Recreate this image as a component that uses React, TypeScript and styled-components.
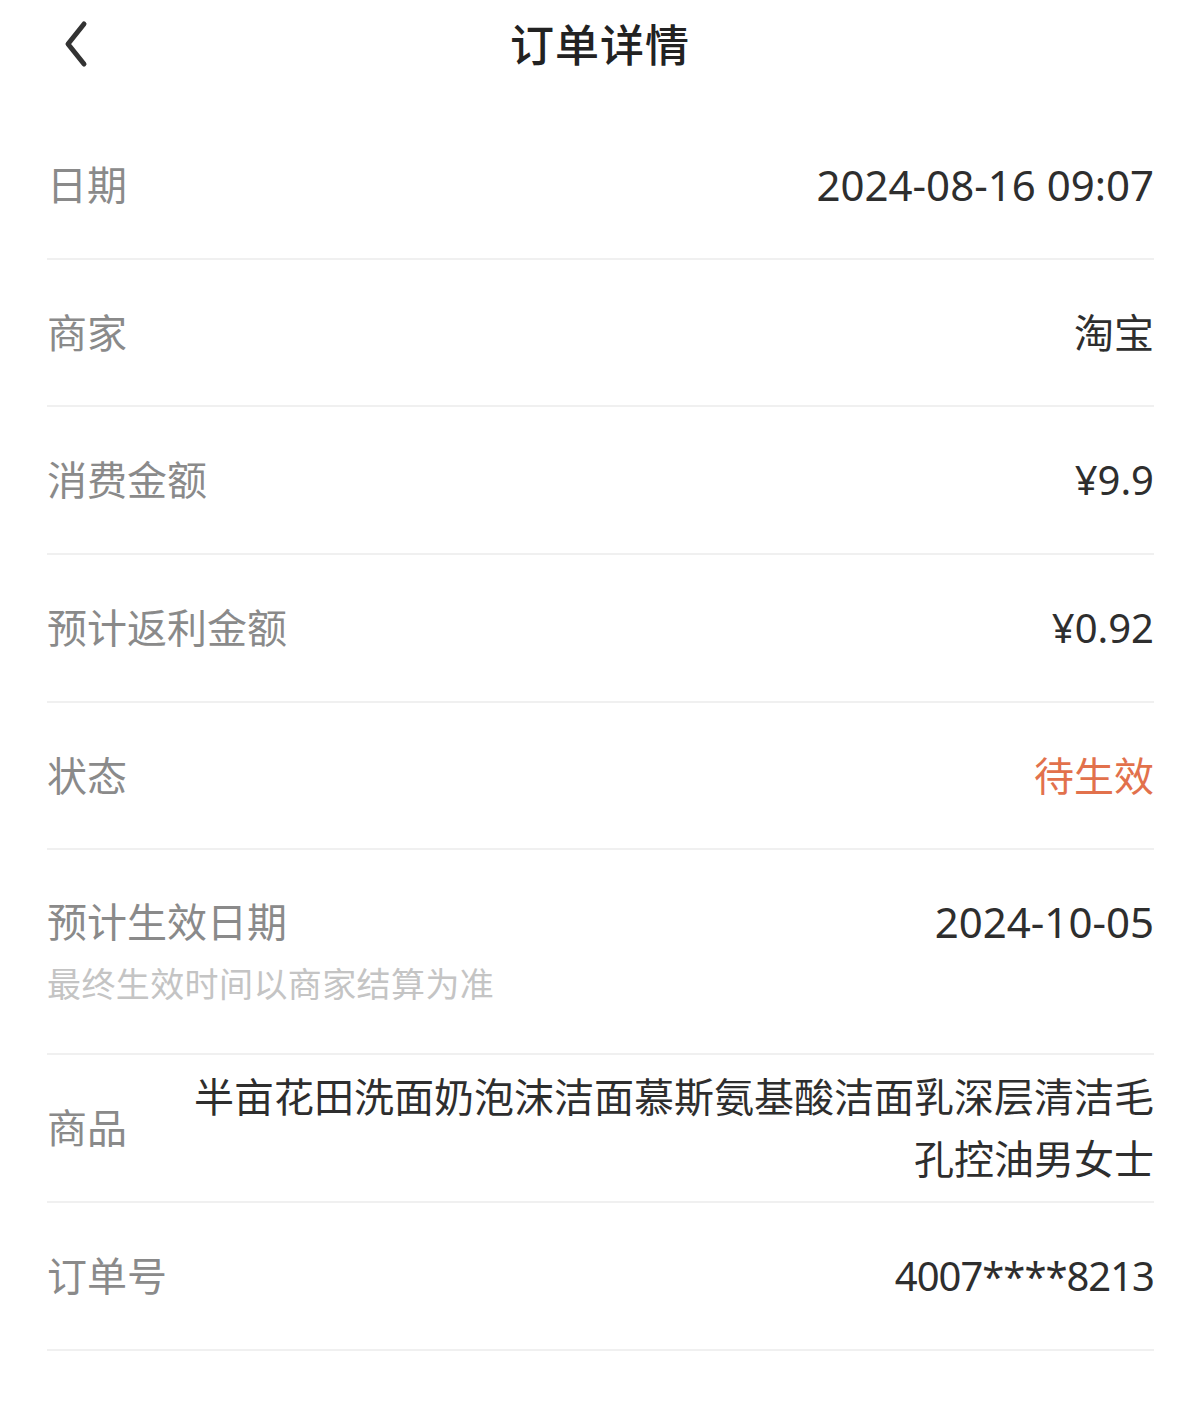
import React from "react";
import styled, { createGlobalStyle } from "styled-components";

const GlobalStyle = createGlobalStyle`
  html, body {
    margin: 0;
    padding: 0;
    background: #ffffff;
  }
  body {
    font-family: "Noto Sans", "Noto Sans CJK SC", sans-serif;
    color: #333333;
  }
`;

const Page = styled.div`
  width: 1200px;
  min-height: 1421px;
  background: #ffffff;
`;

const Header = styled.div`
  height: 86px;
  position: relative;
  display: flex;
  align-items: center;
  justify-content: center;
`;

const BackButton = styled.button`
  position: absolute;
  left: 54px;
  top: 18px;
  width: 44px;
  height: 52px;
  padding: 0;
  border: none;
  background: none;
  display: flex;
  align-items: center;
  justify-content: center;
`;

const Title = styled.h1`
  margin: 0;
  font-size: 44px;
  font-weight: 500;
  color: #222222;
  letter-spacing: 1px;
`;

const List = styled.div`
  padding: 26px 46px 0 47px;
`;

const Row = styled.div<{ $tall?: boolean }>`
  display: flex;
  align-items: ${(p) => (p.$tall ? "flex-start" : "center")};
  justify-content: space-between;
  gap: 20px;
  min-height: ${(p) => (p.$tall ? "205px" : "147.7px")};
  padding: ${(p) => (p.$tall ? "45px 0 0" : "0")};
  box-sizing: border-box;
  border-bottom: 2px solid #f0f0f0;
`;

const LabelCol = styled.div`
  display: flex;
  flex-direction: column;
  flex-shrink: 0;
`;

const Label = styled.div`
  font-size: 40px;
  line-height: 54px;
  color: #8a8a8a;
  width: 120px;
  flex-shrink: 0;
  white-space: nowrap;
`;

const Hint = styled.div`
  margin-top: 12px;
  font-size: 34px;
  line-height: 46px;
  color: #c4c4c4;
  letter-spacing: 0.4px;
  white-space: nowrap;
`;

const Value = styled.div<{ $accent?: boolean; $size?: number; $tight?: boolean }>`
  font-size: ${(p) => p.$size ?? 40}px;
  line-height: 54px;
  color: ${(p) => (p.$accent ? "#e2714c" : "#2e2e2e")};
  letter-spacing: ${(p) => (p.$tight ? "-1px" : "0")};
  text-align: right;
  white-space: nowrap;
`;

const ProductRow = styled.div`
  display: flex;
  align-items: center;
  justify-content: space-between;
  gap: 10px;
  min-height: 148px;
  padding: 11px 0;
  box-sizing: border-box;
  border-bottom: 2px solid #f0f0f0;
`;

const ProductName = styled.div`
  flex: 1;
  font-size: 40px;
  line-height: 62px;
  color: #2e2e2e;
  text-align: right;
`;

type Item = {
  label: string;
  value: string;
  accent?: boolean;
  size?: number;
  tight?: boolean;
};

const rows: Item[] = [
  { label: "日期", value: "2024-08-16 09:07", size: 42 },
  { label: "商家", value: "淘宝" },
  { label: "消费金额", value: "¥9.9" },
  { label: "预计返利金额", value: "¥0.92" },
  { label: "状态", value: "待生效", accent: true },
];

const App = () => {
  return (
    <Page>
      <GlobalStyle />
      <Header>
        <BackButton aria-label="返回">
          <svg width="30" height="48" viewBox="0 0 30 48" fill="none">
            <path
              d="M23 4 L7 24 L23 44"
              stroke="#333333"
              strokeWidth="5"
              strokeLinecap="round"
              strokeLinejoin="round"
            />
          </svg>
        </BackButton>
        <Title>订单详情</Title>
      </Header>
      <List>
        {rows.map((r) => (
          <Row key={r.label}>
            <Label>{r.label}</Label>
            <Value $accent={r.accent} $size={r.size} $tight={r.tight}>
              {r.value}
            </Value>
          </Row>
        ))}
        <Row $tall>
          <LabelCol>
            <Label>预计生效日期</Label>
            <Hint>最终生效时间以商家结算为准</Hint>
          </LabelCol>
          <Value $size={42}>2024-10-05</Value>
        </Row>
        <ProductRow>
          <Label>商品</Label>
          <ProductName>
            半亩花田洗面奶泡沫洁面慕斯氨基酸洁面乳深层清洁毛孔控油男女士
          </ProductName>
        </ProductRow>
        <Row>
          <Label>订单号</Label>
          <Value $tight>4007****8213</Value>
        </Row>
      </List>
    </Page>
  );
};

export default App;
